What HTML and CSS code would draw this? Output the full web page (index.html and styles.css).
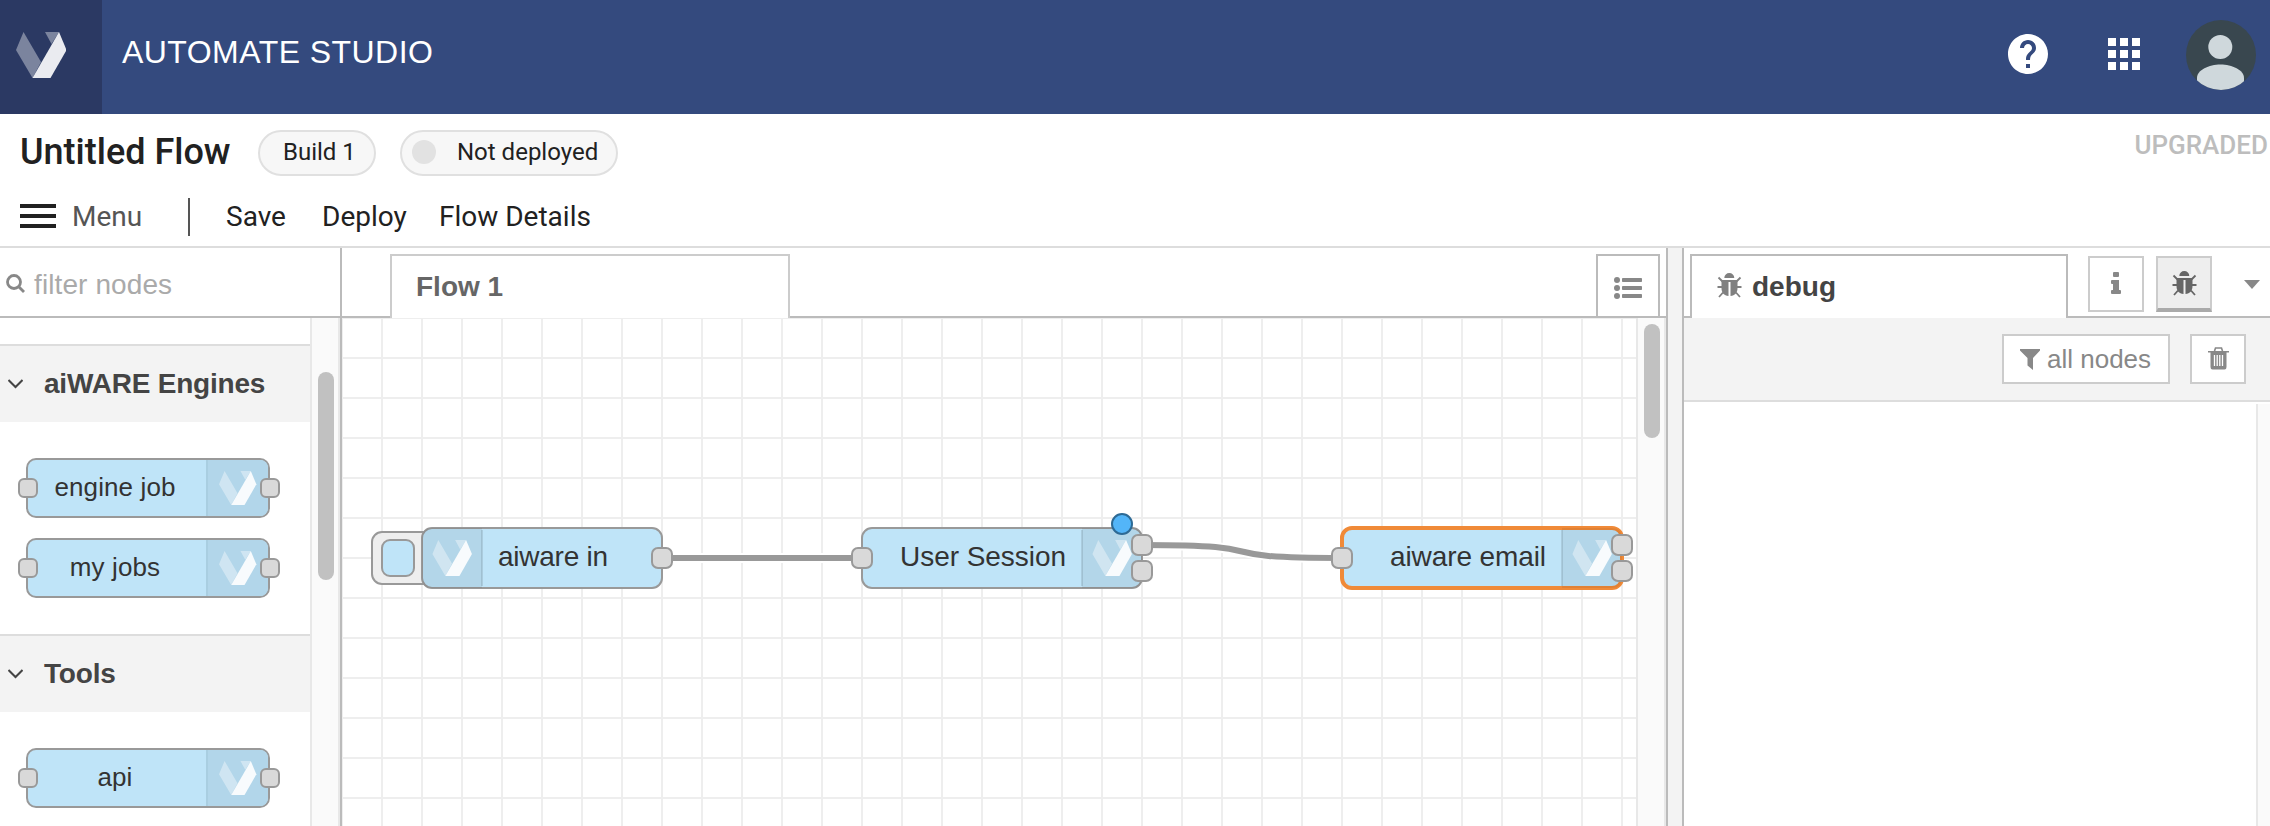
FILE: index.html
```html
<!DOCTYPE html>
<html lang="en">
<head>
<meta charset="utf-8">
<title>Automate Studio</title>
<link rel="stylesheet" href="styles.css">
</head>
<body>
<svg class="defs" aria-hidden="true">
  <symbol id="v" viewBox="0 0 50 46">
    <path d="M7.500 0 25 30 16.500 46 0 18Z" opacity=".38"/>
    <path d="M29 0H43L35.500 12Z" opacity=".38"/>
    <path d="M43 0 50.500 18 34.500 46H16.500Z" opacity=".9"/>
  </symbol>
  <symbol id="bug" viewBox="0 0 25 25">
    <path d="M7.300 5a5 5 0 0 1 10 0Z"/>
    <path d="M4.500 7H20.500V15C20.500 20 18 22.500 13.500 23V9H11.500V23C7 22.500 4.500 20 4.500 15Z"/>
    <path d="M5.500 8.500 1.500 4.500M19.500 8.500 23.500 4.500M0.500 14H5M20 14H24.500M6 19.500 2 24M19 19.500 23 24" fill="none" stroke="currentColor" stroke-width="1.800"/>
  </symbol>
</svg>
<header class="topbar">
  <div class="brand"><svg width="51" height="46" viewBox="0 0 51 46"><use href="#v" width="50" height="46"/></svg></div>
  <h1 class="product">AUTOMATE STUDIO</h1>
  <svg class="help" width="40" height="40" viewBox="2 2 20 20"><path fill="#fff" d="M12 2C6.480 2 2 6.480 2 12s4.480 10 10 10 10-4.480 10-10S17.520 2 12 2zm1 17h-2v-2h2v2zm2.070-7.750l-.9.920C13.450 12.900 13 13.500 13 15h-2v-.5c0-1.100.45-2.100 1.170-2.830l1.240-1.260c.37-.36.59-.86.59-1.410 0-1.100-.9-2-2-2s-2 .9-2 2H8c0-2.210 1.790-4 4-4s4 1.790 4 4c0 .88-.36 1.680-.93 2.250z"/></svg>
  <div class="apps"><i></i><i></i><i></i><i></i><i></i><i></i><i></i><i></i><i></i></div>
  <svg class="avatar" width="70" height="70" viewBox="0 0 70 70"><clipPath id="c"><circle cx="35" cy="35" r="35"/></clipPath><g clip-path="url(#c)"><path fill="#39474f" d="M0 0H70V70H0Z"/><circle cx="34.300" cy="27" r="12" fill="#cfd8dc"/><path fill="#cfd8dc" d="M11 70V58C11 50 23 44.500 34.500 44.500S58 50 58 58V70Z"/></g></svg>
</header>
<section class="flowbar">
  <div class="titlerow">
    <h2 class="flowname">Untitled Flow</h2>
    <span class="pill build">Build 1</span>
    <span class="pill status"><i class="dot"></i>Not deployed</span>
    <span class="upgraded">UPGRADED</span>
  </div>
  <nav class="menurow">
    <div class="burger"><i></i><i></i><i></i></div>
    <span class="menu">Menu</span>
    <i class="rule"></i>
    <span class="save">Save</span><span class="deploy">Deploy</span><span class="details">Flow Details</span>
  </nav>
</section>
<main class="workspace">
  <aside class="palette">
    <div class="search">
      <svg width="20" height="20" viewBox="0 0 20 20" fill="none" stroke="#888" stroke-width="2.800"><circle cx="8" cy="8" r="6.500"/><path d="M12.500 12.500 18 18"/></svg>
      <span>filter nodes</span>
    </div>
    <div class="palbody">
      <div class="cats">
        <h3 class="cat"><svg width="15" height="10" viewBox="0 0 15 10"><path d="M.5 1 7.500 8 14.500 1"/></svg>aiWARE Engines</h3>
        <div class="nodes">
          <div class="pnode"><b class="port l"></b><span>engine job</span><div class="ico"><svg width="39" height="34"><use href="#v"/></svg></div><b class="port r"></b></div>
          <div class="pnode"><b class="port l"></b><span>my jobs</span><div class="ico"><svg width="39" height="34"><use href="#v"/></svg></div><b class="port r"></b></div>
        </div>
        <h3 class="cat"><svg width="15" height="10" viewBox="0 0 15 10"><path d="M.5 1 7.500 8 14.500 1"/></svg>Tools</h3>
        <div class="nodes last">
          <div class="pnode"><b class="port l"></b><span>api</span><div class="ico"><svg width="39" height="34"><use href="#v"/></svg></div><b class="port r"></b></div>
        </div>
      </div>
      <div class="track"><i class="thumb"></i></div>
    </div>
  </aside>
  <section class="editor">
    <div class="tabs">
      <div class="tab flow">Flow 1</div>
      <div class="listbtn"><svg width="28" height="22" viewBox="0 0 28 22" fill="#888"><circle cx="3" cy="3" r="3"/><circle cx="3" cy="11" r="3"/><circle cx="3" cy="19" r="3"/><rect x="8" y="1" width="20" height="4" rx=".8"/><rect x="8" y="9" width="20" height="4" rx=".8"/><rect x="8" y="17" width="20" height="4" rx=".8"/></svg></div>
    </div>
    <div class="edbody">
      <svg class="canvas" width="1294" height="508" viewBox="342 318 1294 508">
        <defs><pattern id="grid" x="341" y="317" width="40" height="40" patternUnits="userSpaceOnUse"><path d="M0 0H40V2H0ZM0 0H2V40H0Z" fill="#eee"/></pattern></defs>
        <path fill="#fff" d="M342 318H1636V826H342Z"/>
        <path fill="url(#grid)" d="M342 318H1636V826H342Z"/>
        <g fill="none"><path class="halo" d="M662 558H862M1142 545C1292 545 1192 558 1342 558"/><path class="wire" d="M662 558H862M1142 545C1292 545 1192 558 1342 558"/></g>
        <g class="node">
          <rect class="trigger" x="372" y="532" width="64" height="52" rx="10"/>
          <rect x="382" y="540" width="32" height="36" rx="8"/>
          <rect x="422" y="528" width="240" height="60" rx="10"/>
          <path class="shade" d="M432 528H482V588H432Q422 588 422 578V538Q422 528 432 528Z"/><path class="edge" d="M482 530V586"/>
          <use href="#v" x="432" y="540" width="40" height="36"/>
          <text x="498" y="566" textLength="110">aiware in</text>
          <rect class="p" x="652" y="548" width="20" height="20" rx="6"/>
        </g>
        <g class="node">
          <rect x="862" y="528" width="280" height="60" rx="10"/>
          <path class="shade" d="M1132 528H1082V588H1132Q1142 588 1142 578V538Q1142 528 1132 528Z"/><path class="edge" d="M1082 530V586"/>
          <use href="#v" x="1092" y="540" width="40" height="36"/>
          <text x="900" y="566" textLength="166">User Session</text>
          <rect class="p" x="852" y="548" width="20" height="20" rx="6"/><rect class="p" x="1132" y="535" width="20" height="20" rx="6"/><rect class="p" x="1132" y="561" width="20" height="20" rx="6"/>
          <circle cx="1122" cy="524" r="10" fill="#53b5f8" stroke="#2d6a95" stroke-width="2"/>
        </g>
        <g class="node">
          <rect class="sel" x="1342" y="528" width="280" height="60" rx="10"/>
          <path class="shade" d="M1612 528H1562V588H1612Q1622 588 1622 578V538Q1622 528 1612 528Z"/><path class="edge" d="M1562 530V586"/>
          <use href="#v" x="1572" y="540" width="40" height="36"/>
          <text x="1390" y="566" textLength="156">aiware email</text>
          <rect class="p" x="1332" y="548" width="20" height="20" rx="6"/><rect class="p" x="1612" y="535" width="20" height="20" rx="6"/><rect class="p" x="1612" y="561" width="20" height="20" rx="6"/>
        </g>
      </svg>
      <div class="track"><i class="thumb"></i></div>
    </div>
  </section>
  <div class="splitter"></div>
  <aside class="sidebar">
    <div class="tabs">
      <div class="tab debug"><svg width="25" height="25"><use href="#bug"/></svg>debug</div>
      <div class="sbtn info"><svg width="10" height="22" viewBox="0 0 10 22" fill="#888"><rect x="2" width="6" height="5" rx="1"/><path d="M0 9Q0 8 1 8H8V18H9Q10 18 10 19V21Q10 22 9 22H1Q0 22 0 21V19Q0 18 1 18H2V12H1Q0 12 0 11Z"/></svg></div>
      <div class="sbtn active"><svg width="25" height="25"><use href="#bug"/></svg></div>
      <svg class="caret" width="16" height="9" viewBox="0 0 16 9"><path d="M0 0H16L8 9Z" fill="#888"/></svg>
    </div>
    <div class="tools">
      <div class="btn filter"><svg width="20" height="21" viewBox="0 0 20 21"><path d="M0 0H20V1.500L13 9V21L7.500 16.500V9L0 1.500Z" fill="#888"/></svg>all nodes</div>
      <div class="btn trash"><svg width="21" height="23" viewBox="0 0 21 23"><path d="M6.500 4 7.500 1H13.500L14.500 4" fill="none" stroke="#888" stroke-width="1.600"/><path fill="#888" d="M0 4H21V5.500H18.500V20Q18.500 22.500 16.500 22.500H4.500Q2.500 22.500 2.500 20V5.500H0Z"/><path d="M6.500 8V19M9.200 8V19M11.800 8V19M14.500 8V19" stroke="#fff" stroke-width="1.300"/></svg></div>
    </div>
    <div class="log"><i></i></div>
  </aside>
</main>
</body>
</html>
```
FILE: styles.css
```css
* { box-sizing: border-box; }
body { margin: 0; width: 2270px; height: 826px; overflow: hidden; background: #fff; font-family: "Liberation Sans", Arial, sans-serif; }
h1, h2, h3 { margin: 0; }
svg, i, b { display: block; flex: none; }
.defs { position: absolute; width: 0; height: 0; }

.topbar { height: 114px; display: flex; align-items: center; background: #344a7e; color: #fff; padding-right: 14px; }
.brand { width: 102px; height: 114px; padding: 32px 0 0 16px; background: #2b3963; fill: #fff; }
.product { font-size: 32px; font-weight: 400; margin-left: 20px; line-height: 36px; padding-bottom: 10px; letter-spacing: 0.45px; white-space: nowrap; }
.help { margin: -6px 60px 0 auto; }
.apps { display: grid; grid-template-columns: repeat(3, 8px); gap: 4px; margin: -6px 46px 0 0; }
.apps i { height: 8px; background: #fff; }
.avatar { margin-top: -4px; }

.flowbar { height: 134px; border-bottom: 2px solid #ddd; font-family: Roboto, sans-serif; color: #212121; }
.titlerow { display: flex; height: 76px; padding: 16px 2px 0 20px; }
.flowname { width: 238px; font-size: 36px; font-weight: 500; line-height: 44px; white-space: nowrap; }
.pill { height: 46px; border: 2px solid #e0e0e0; border-radius: 23px; background: #f7f7f7; font-size: 24px; line-height: 40px; white-space: nowrap; }
.build { width: 118px; padding-left: 23px; }
.status { width: 218px; margin-left: 24px; padding-left: 10px; display: flex; }
.dot { width: 24px; height: 24px; border-radius: 50%; background: #e2e2e2; margin: 8px 21px 0 0; }
.upgraded { margin-left: auto; color: #bdbdbd; font-size: 26px; font-weight: 500; line-height: 30px; }
.menurow { display: flex; padding: 8px 0 0 20px; font-size: 28px; line-height: 37px; white-space: nowrap; }
.burger { width: 36px; display: grid; gap: 6px; margin: 6px 16px 0 0; align-content: start; }
.burger i { height: 4px; background: #212121; }
.menu { width: 116px; color: #555; }
.rule { width: 2px; height: 38px; background: #555; margin-right: 36px; }
.save { width: 96px; }
.deploy { width: 117px; }

.workspace { display: flex; height: 578px; }
.palette { width: 342px; border-right: 2px solid #bbb; }
.search { height: 70px; display: flex; border-bottom: 2px solid #bbb; padding: 26px 0 0 6px; color: #aaa; font-size: 28px; line-height: 22px; letter-spacing: 0.1px; }
.search span { margin-left: 8px; }
.palbody { display: flex; height: 508px; }
.cats { width: 310px; padding-top: 26px; }
.cat { height: 78px; display: flex; align-items: center; border-top: 2px solid #ddd; background: #f3f3f3; color: #444; font-size: 28px; padding-left: 8px; letter-spacing: -0.2px; }
.cat svg { fill: none; stroke: #444; stroke-width: 2; margin-right: 21px; }
.nodes { height: 212px; padding: 36px 0 0 26px; display: grid; gap: 20px; align-content: start; }
.last { height: 114px; }
.pnode { position: relative; width: 244px; height: 60px; border: 2px solid #999; border-radius: 10px; background: #bfe4f8; display: flex; color: #333; font-size: 26px; line-height: 54px; letter-spacing: 0.1px; }
.pnode span { width: 174px; margin-right: 4px; text-align: center; }
.ico { flex: 1; border-left: 2px solid #a9cee1; background: #b2d6ea; border-radius: 0 8px 8px 0; padding: 11px 0 0 10px; fill: #fff; }
.port { position: absolute; top: 18px; width: 20px; height: 20px; border: 2px solid #999; border-radius: 6px; background: #d9d9d9; }
.l { left: -10px; }
.r { right: -12px; }
.track { width: 30px; background: #fafafa; border: solid #e8e8e8; border-width: 0 2px; }
.thumb { width: 16px; border-radius: 8px; background: #c1c1c1; margin-left: 6px; }
.palbody .thumb { height: 208px; margin-top: 54px; }

.editor { width: 1326px; border-right: 2px solid #bbb; }
.tabs { height: 70px; display: flex; border-bottom: 2px solid #bbb; }
.tab { height: 64px; margin-top: 6px; border: 2px solid #bbb; border-bottom: 0; background: #fff; color: #444; font-size: 28px; font-weight: 700; line-height: 62px; }
.flow { width: 400px; margin-left: 48px; padding-left: 24px; color: #666; border-color: #ccc; }
.listbtn { width: 64px; height: 62px; margin: 6px 6px 0 auto; border: 2px solid #bbb; border-bottom: 0; padding: 21px 0 0 16px; }
.edbody { display: flex; height: 508px; }
.edbody .thumb { height: 114px; margin-top: 6px; }
.canvas use { fill: #fff; }
.halo { stroke: #fff; stroke-width: 10; }
.wire { stroke: #999; stroke-width: 6; }
.node rect { fill: #bfe4f8; stroke: #999; stroke-width: 2; }
.node rect.trigger { fill: #eee; }
.node rect.p { fill: #d9d9d9; }
.node rect.sel { stroke: #f08a38; stroke-width: 4; }
.node text { font-size: 28px; fill: #333; }
.shade { fill: #000; fill-opacity: .06; }
.edge { stroke: #000; stroke-opacity: .1; stroke-width: 2; }
.splitter { width: 14px; background: #f3f3f3; }
.sidebar { flex: 1; border-left: 2px solid #bbb; }
.debug { width: 378px; margin-left: 6px; padding-left: 25px; display: flex; }
.debug svg { margin: 17px 10px 0 0; color: #808080; fill: #808080; }
.sbtn { width: 56px; height: 56px; margin-top: 8px; border: 2px solid #ccc; }
.info { margin-left: 20px; padding: 14px 0 0 21px; }
.active { margin-left: 12px; background: #eee; border-bottom: 4px solid #aaa; padding: 13px 0 0 14px; color: #666; fill: #666; }
.caret { margin: 32px 0 0 32px; }
.tools { height: 84px; display: flex; justify-content: flex-end; gap: 20px; padding: 16px 24px 0 0; background: #f3f3f3; border-bottom: 2px solid #ddd; }
.btn { height: 50px; border: 2px solid #ccc; background: #fff; color: #888; font-size: 26px; line-height: 46px; display: flex; white-space: nowrap; }
.filter { width: 168px; padding-left: 16px; }
.filter svg { margin: 13px 7px 0 0; }
.trash { width: 56px; padding: 11px 0 0 16px; }
.log { height: 424px; padding-top: 2px; display: flex; justify-content: flex-end; }
.log i { width: 14px; background: #fafafa; border-left: 2px solid #e8e8e8; }
```
